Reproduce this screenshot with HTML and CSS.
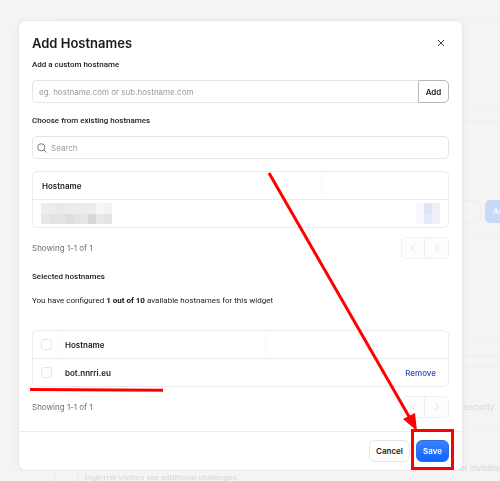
FILE: index.html
```html
<!DOCTYPE html>
<html lang="en">
<head>
<meta charset="utf-8">
<meta name="viewport" content="width=device-width, initial-scale=1">
<title>Add Hostnames</title>
<link rel="stylesheet" href="styles.css">
</head>
<body>
<div class="backdrop" aria-hidden="true">
  <div class="panel panel-intro"></div>
  <div class="panel panel-hosts">
    <div class="panel-tools"><span class="ghost-field"></span><span class="ghost-button">Add</span></div>
  </div>
  <div class="panel-gap"></div>
  <div class="panel panel-modes">
    <p class="ghost-line ghost-right">security.</p>
    <p class="ghost-line ghost-wide">or invisible c</p>
    <p class="ghost-line ghost-option">High-risk visitors see additional challenges.</p>
  </div>
</div>

<main class="dialog" role="dialog" aria-labelledby="dialog-title">
  <div class="dialog-body">
    <header class="dialog-head">
      <h1 id="dialog-title">Add Hostnames</h1>
      <button class="close" type="button" aria-label="Close">
        <svg viewBox="0 0 8 8"><path d="M1 1l6 6M7 1L1 7"/></svg>
      </button>
    </header>

    <label class="label" for="custom">Add a custom hostname</label>
    <div class="add-row">
      <input id="custom" class="field" type="text" placeholder="eg. hostname.com or sub.hostname.com">
      <button class="add" type="button">Add</button>
    </div>

    <label class="label" for="search">Choose from existing hostnames</label>
    <div class="search">
      <svg viewBox="0 0 10 10"><circle cx="4.3" cy="4.3" r="3.6"/><path d="M7 7l2.5 2.5"/></svg>
      <input id="search" type="text" placeholder="Search">
    </div>

    <table class="table available">
      <thead><tr><th class="split">Hostname</th><th></th></tr></thead>
      <tbody><tr>
        <td><svg class="redacted" viewBox="0 0 71 21" shape-rendering="crispEdges">
          <path fill="#ededed" d="M0 0h55v11H0z"/><path fill="#e9e9e9" d="M15 0h9v11h-9z"/><path fill="#f6f6f6" d="M55 0h8v11h-8z"/><path fill="#f2f2f2" d="M63 0h8v11h-8z"/>
          <path fill="#e3e3e3" d="M0 11h71v10H0z"/><path fill="#e8e8e8" d="M0 11h8v10H0z"/><path fill="#dedede" d="M24 11h8v10h-8z"/><path fill="#e6e6e6" d="M40 11h7v10h-7z"/><path fill="#d8d8d8" d="M47 11h8v10h-8z"/><path fill="#e9e9e9" d="M55 11h8v10h-8z"/>
        </svg></td>
        <td class="action"><svg class="redacted redacted-link" viewBox="0 0 24 21" shape-rendering="crispEdges">
          <path fill="#f8f9fe" d="M0 0h8v21H0z"/><path fill="#dfe5f6" d="M8 0h8v11H8z"/><path fill="#e6ebf9" d="M8 11h8v10H8z"/><path fill="#edf0fb" d="M16 0h8v21h-8z"/>
        </svg></td>
      </tr></tbody>
    </table>

    <div class="pager">
      <span>Showing 1-1 of 1</span>
      <div class="pager-buttons">
        <button type="button" aria-label="Previous" disabled><svg viewBox="0 0 6 8"><path d="M4.5 1l-3 3 3 3"/></svg></button>
        <button type="button" aria-label="Next" disabled><svg viewBox="0 0 6 8"><path d="M1.5 1l3 3-3 3"/></svg></button>
      </div>
    </div>

    <h2 class="label">Selected hostnames</h2>
    <p class="summary">You have configured <strong>1 out of 10</strong> available hostnames for this widget</p>

    <div class="marked">
      <table class="table selected">
        <thead><tr><th class="check split"><input type="checkbox" aria-label="Select all"></th><th class="name split">Hostname</th><th></th></tr></thead>
        <tbody><tr><td class="check"><input type="checkbox" aria-label="Select bot.nnrri.eu"></td><td class="name">bot.nnrri.eu</td><td class="action"><a href="#">Remove</a></td></tr></tbody>
      </table>
      <svg class="underline" viewBox="0 0 133 4"><path d="M0 1.5L133 2.3" stroke="#f00" stroke-width="3"/></svg>
    </div>

    <div class="pager">
      <span>Showing 1-1 of 1</span>
      <div class="pager-buttons">
        <button type="button" aria-label="Previous" disabled><svg viewBox="0 0 6 8"><path d="M4.5 1l-3 3 3 3"/></svg></button>
        <button type="button" aria-label="Next" disabled><svg viewBox="0 0 6 8"><path d="M1.5 1l3 3-3 3"/></svg></button>
      </div>
    </div>
  </div>

  <footer class="dialog-foot">
    <button class="cancel" type="button">Cancel</button>
    <div class="callout">
      <button class="save" type="button">Save</button>
      <svg class="arrow" viewBox="0 0 184 292">
        <path d="M4 3L146 250" stroke="#f00" stroke-width="3" fill="none"/>
        <path d="M138 249L150 243 152 261z" fill="#f00"/>
      </svg>
    </div>
  </footer>
</main>
</body>
</html>
```

FILE: styles.css
```css
* { box-sizing: border-box; }

body {
  margin: 0;
  background: #f4f4f4;
  color: #222;
  font: 8px/12px Inter, "Liberation Sans", sans-serif;
}

button, input { font: inherit; color: inherit; margin: 0; }
h1, h2, p { margin: 0; }
svg { display: block; fill: none; }

/* Dimmed page behind the dialog */
.backdrop {
  position: fixed;
  inset: 0;
  overflow: hidden;
  padding: 19px 0 0 55px;
  color: #d6d6d6;
}
.panel { border: 1px solid #efefef; border-right: 0; }
.panel-intro { height: 91px; margin-bottom: 10px; }
.panel-hosts { height: 223px; }
.panel-tools {
  display: flex;
  justify-content: flex-end;
  gap: 4px;
  height: 116px;
  padding-top: 79px;
  border-bottom: 1px solid #efefef;
}
.ghost-field { width: 120px; height: 23px; border: 1px solid #eee; border-radius: 5px; }
.ghost-button {
  width: 15px;
  height: 23px;
  padding: 5px 0 0 8px;
  overflow: hidden;
  border-radius: 5px 0 0 5px;
  background: #c8daf8;
  color: #f6f9ff;
  font-weight: 600;
}
.panel-gap { height: 14px; border-bottom: 1px solid #ededed; margin-bottom: 10px; }
.panel-modes { height: 200px; }
.ghost-line { white-space: nowrap; }
.ghost-right { padding: 33px 0 15px 408px; border-bottom: 1px solid #efefef; }
.ghost-wide { padding: 33px 0 0 404px; }
.ghost-option { margin: -2px 0 0 21px; padding-left: 7px; border-left: 1px solid #ececec; font-family: Roboto, Inter, sans-serif; }

/* Dialog */
.dialog {
  position: relative;
  margin: 20px 37px 0 18px;
  border: 1px solid #e8e8e8;
  border-radius: 8px;
  background: #fff;
  box-shadow: 0 3px 8px rgba(0, 0, 0, .05);
}
.dialog-body { padding: 12px 13px 13px; }
.dialog-head {
  display: flex;
  justify-content: space-between;
  align-items: center;
  margin-bottom: 6px;
}
h1 { font-size: 13px; line-height: 20px; font-weight: 600; color: #1b1b1b; }
.close { width: 16px; height: 16px; padding: 4px; border: 0; background: none; }
.close svg { width: 8px; height: 8px; stroke: #444; }
.label, .summary { font-family: Roboto, Inter, sans-serif; font-size: 8px; }
.label { display: block; line-height: 12px; font-weight: 500; color: #222; }

.add-row { display: flex; margin: 9px 0 12px; }
.field {
  flex: 1;
  min-width: 0;
  height: 23px;
  padding: 0 6px;
  border: 1px solid #e6e6e6;
  border-right: 0;
  border-radius: 5px 0 0 5px;
  background: #fff;
}
.add {
  width: 31px;
  height: 23px;
  padding: 0;
  border: 1px solid #b8b8b8;
  border-radius: 0 5px 5px 0;
  background: #fff;
  font-weight: 600;
}
::placeholder { color: #9a9a9a; opacity: 1; }

.search {
  display: flex;
  align-items: center;
  gap: 4px;
  height: 23px;
  margin: 9px 0 12px;
  padding: 0 4px;
  border: 1px solid #e6e6e6;
  border-radius: 5px;
}
.search svg { width: 10px; height: 10px; stroke: #777; }
.search input { flex: 1; min-width: 0; padding: 0; border: 0; background: none; }

.table {
  width: 100%;
  table-layout: fixed;
  border: 1px solid #ebebeb;
  border-radius: 5px;
  border-spacing: 0;
}
.table th, .table td { height: 28px; padding: 0 9px; text-align: left; vertical-align: middle; font-weight: 600; }
.table th { border-bottom: 1px solid #ebebeb; }
.table th.split { border-right: 1px solid #fafafa; }
.table td { height: 27px; }
.table .check { width: 26px; padding: 0 0 0 8px; }
.table .name { width: 207px; padding-left: 6px; }
.available th:first-child { width: 289px; }
.table .action { text-align: right; padding-right: 12px; }
.available .action { padding-right: 8px; }
.action a { color: #2b48c4; font-weight: 500; text-decoration: none; }
.redacted { width: 71px; height: 21px; margin-left: -1px; }
.redacted-link { width: 24px; margin-left: auto; }
input[type="checkbox"] {
  display: block;
  appearance: none;
  width: 11px;
  height: 11px;
  border: 1px solid #e6e6e6;
  border-radius: 3px;
  background: #fff;
}

.pager {
  display: flex;
  justify-content: space-between;
  align-items: center;
  margin-top: 9px;
  color: #6e6e6e;
}
.pager-buttons { display: flex; }
.pager-buttons button {
  display: grid;
  place-items: center;
  width: 24px;
  height: 22px;
  padding: 0;
  border: 1px solid #f0f0f0;
  background: #fdfdfd;
}
.pager-buttons button:first-child { border-radius: 5px 0 0 5px; }
.pager-buttons button:last-child { border-left: 0; border-radius: 0 5px 5px 0; }
.pager-buttons svg { width: 6px; height: 8px; stroke: #dcdcdc; }

h2.label { margin: 12px 0; }
.summary { margin-bottom: 23px; }
.summary strong { font-weight: 700; color: #111; }

.marked { position: relative; }
.underline { position: absolute; left: -2px; bottom: -5px; width: 133px; height: 4px; }

.dialog-foot {
  display: flex;
  justify-content: flex-end;
  gap: 6px;
  padding: 8px 13px;
  border-top: 1px solid #ececec;
}
.dialog-foot button { height: 22px; padding: 0; border-radius: 6px; font-weight: 600; }
.cancel { width: 41px; border: 1px solid #e6e6e6; background: #fff; }
.callout { position: relative; }
.callout::after {
  content: "";
  position: absolute;
  inset: -11px -5px -8px;
  border: 3px solid #f00;
  pointer-events: none;
}
.save {
  display: block;
  width: 33px;
  border: 1px solid #2a6fe8;
  background: linear-gradient(#3b82ff, #0f66ff);
  color: #fff;
}
.arrow { position: absolute; right: 0; bottom: 0; width: 184px; height: 292px; pointer-events: none; }
```
